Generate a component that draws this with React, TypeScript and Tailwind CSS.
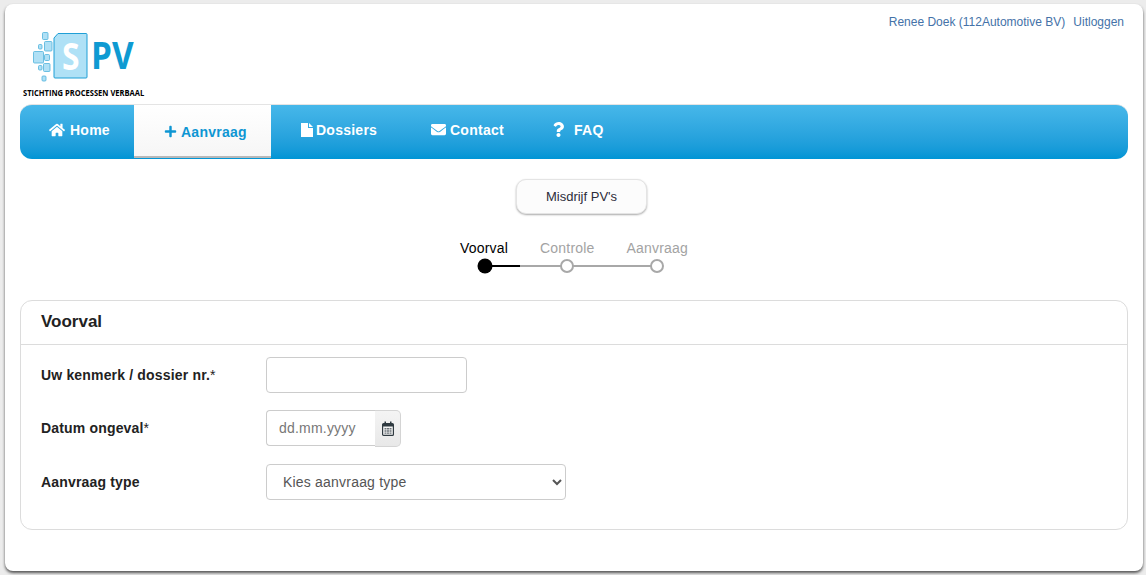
import { FaEnvelope, FaHome, FaPlus, FaQuestion } from 'react-icons/fa'

function Logo() {
  const squares = [
    [42.5, 32.5, 5.5, 7],
    [38.5, 44.5, 3.5, 4.5],
    [44.5, 41.5, 7.5, 9.5],
    [33.5, 51.5, 10, 11.5],
    [44.5, 54.5, 5, 6],
    [38.5, 65.5, 3.5, 4.5],
    [43.5, 63.5, 6.5, 8],
    [42, 76, 4, 5],
  ]
  return (
    <svg width="130" height="76" viewBox="20 24 130 76">
      {squares.map(([x, y, w, h]) => (
        <rect key={`${x}-${y}`} x={x} y={y} width={w} height={h} rx="1" fill="#b0e0f5" stroke="#4fb3dc" strokeWidth="0.8" />
      ))}
      <path d="M58 33.5H86Q87 33.5 87 34.5V77Q87 78 86 78H55Q54 78 54 77V38Z" fill="#afe1f6" stroke="#1f9fd6" strokeWidth="1" />
      <text transform="translate(62 70) scale(0.86 1)" fontFamily="'Open Sans', sans-serif" fontWeight="700" fontSize="37" fill="#ffffff">S</text>
      <text transform="translate(91 69) scale(0.9 1)" fontFamily="'Open Sans', sans-serif" fontWeight="700" fontSize="37" fill="#0e9ad2">PV</text>
      <text transform="translate(23 96) scale(0.889 1)" fontFamily="'Open Sans', sans-serif" fontWeight="700" fontSize="8.5" fill="#000000">STICHTING PROCESSEN VERBAAL</text>
    </svg>
  )
}

function FileIcon() {
  return (
    <svg width="12" height="14" viewBox="0 0 12 14" fill="currentColor">
      <path d="M0 0H7V5H12V14H0Z" />
      <path d="M8 0L12 4H8Z" />
    </svg>
  )
}

function CalendarIcon() {
  return (
    <svg width="12" height="15" viewBox="0 0 12 15">
      <rect x="0.6" y="2.6" width="10.8" height="11.8" rx="1" fill="#f4f4f4" stroke="#2f3a40" strokeWidth="1.2" />
      <rect x="1" y="3" width="10" height="2.5" fill="#2f3a40" />
      <rect x="2.5" y="0.5" width="1.5" height="3" fill="#2f3a40" />
      <rect x="8" y="0.5" width="1.5" height="3" fill="#2f3a40" />
      <path d="M2.5 7h2v1.5h-2zM5 7h2v1.5H5zM7.5 7h2v1.5h-2zM2.5 9.2h2v1.5h-2zM5 9.2h2v1.5H5zM7.5 9.2h2v1.5h-2zM2.5 11.4h2v1.3h-2zM5 11.4h2v1.3H5zM7.5 11.4h2v1.3h-2z" fill="#6b7277" />
    </svg>
  )
}

function Step({ label, active }: { label: string; active?: boolean }) {
  return <span className={active ? 'text-black' : 'text-[#a3a3a3]'}>{label}</span>
}

export default function App() {
  return (
    <div className="h-[575px] overflow-hidden bg-[#ececec] pl-[5px] pr-[3px] pt-1 font-['Liberation_Sans',Arial,sans-serif]">
      <div className="h-[567px] rounded-lg bg-white px-[15px] shadow-[0_2px_3px_#555]">
        <header className="flex h-[100px] justify-between">
          <div className="pt-5"><Logo /></div>
          <div className="flex gap-2 pr-[4px] pt-2.5 text-xs leading-[16px] text-[#4472a8]">
            <a>Renee Doek (112Automotive BV)</a>
            <a>Uitloggen</a>
          </div>
        </header>

        <nav className="flex h-[55px] rounded-xl border-t border-[#e4e4e4] bg-gradient-to-b from-[#47b8ea] to-[#0095d5] bg-origin-border text-sm font-bold tracking-[0.25px] text-white">
          <a className="flex h-[49px] w-[114px] items-center gap-[5px] pl-[29px]"><FaHome size={16} /> Home</a>
          <a className="mb-px flex w-[137px] items-center gap-1 border-b-2 border-[#b8b8b8] bg-gradient-to-b from-white to-[#f6f6f6] pl-[30px] pt-0.5 text-[#0e96d3]"><FaPlus size={13} /> Aanvraag</a>
          <a className="flex h-[49px] w-[130px] items-center gap-[3px] pl-[30px]"><FileIcon /> Dossiers</a>
          <a className="flex h-[49px] w-[122px] items-center gap-1 pl-[30px]"><FaEnvelope size={15} /> Contact</a>
          <a className="flex h-[49px] w-[90px] items-center gap-2 pl-[28px]"><FaQuestion size={15} /> FAQ</a>
        </nav>

        <div className="mt-5 flex justify-center pl-[15px]">
          <button className="h-[35px] w-[131px] rounded-[10px] border border-[#e4e4e4] bg-[#fcfcfc] text-[13px] text-[#2c2c3a] shadow-[0_1px_2px_#aaa]">
            Misdrijf PV's
          </button>
        </div>

        <div className="mt-[25px] flex flex-col items-center">
          <div className="flex gap-8 text-sm leading-[18px] tracking-[0.2px]">
            <Step label="Voorval" active />
            <Step label="Controle" />
            <Step label="Aanvraag" />
          </div>
          <svg className="mt-px mr-[6px]" width="188" height="16" viewBox="0 0 188 16">
            <line x1="8" y1="8" x2="180" y2="8" stroke="#a8a8a8" strokeWidth="2" />
            <line x1="8" y1="8" x2="43" y2="8" stroke="#000" strokeWidth="2" />
            <circle cx="8" cy="8" r="7.5" fill="#000" />
            <circle cx="90" cy="8" r="6" fill="#fff" stroke="#a8a8a8" strokeWidth="2" />
            <circle cx="180" cy="8" r="6" fill="#fff" stroke="#a8a8a8" strokeWidth="2" />
          </svg>
        </div>

        <section className="mt-[26px] h-[230px] rounded-xl border border-[#dcdcdc]">
          <h2 className="flex h-[44px] items-center border-b border-[#dcdcdc] px-5 pb-0.5 text-[17px] font-bold text-[#222]">Voorval</h2>
          <div className="flex flex-col px-5 pt-3 text-sm font-bold tracking-[0.17px] text-[#222]">
            <div className="flex h-9 items-center">
              <label className="w-[225px]">Uw kenmerk / dossier nr.<span className="font-normal">*</span></label>
              <input className="h-9 w-[201px] rounded border border-[#ccc] bg-white" />
            </div>
            <div className="mt-[17px] flex h-9 items-center">
              <label className="w-[225px]">Datum ongeval<span className="font-normal">*</span></label>
              <div className="flex h-9 w-[135px] items-start">
                <input placeholder="dd.mm.yyyy" className="h-9 w-[109px] rounded-l border border-r-0 border-[#ccc] pl-3 text-sm font-normal tracking-[0.2px] placeholder:text-[#777]" />
                <span className="flex h-[37px] w-[26px] items-center justify-center rounded-r-[5px] border border-l-0 border-[#d4d4d4] bg-gradient-to-b from-[#f4f4f4] to-[#e8e8e8]"><CalendarIcon /></span>
              </div>
            </div>
            <div className="mt-[18px] flex h-9 items-center">
              <label className="w-[225px]">Aanvraag type</label>
              <select className="h-9 w-[300px] rounded border border-[#ccc] bg-white pl-3 text-sm font-normal tracking-[0.2px] text-[#555]">
                <option>Kies aanvraag type</option>
              </select>
            </div>
          </div>
        </section>
      </div>
    </div>
  )
}
